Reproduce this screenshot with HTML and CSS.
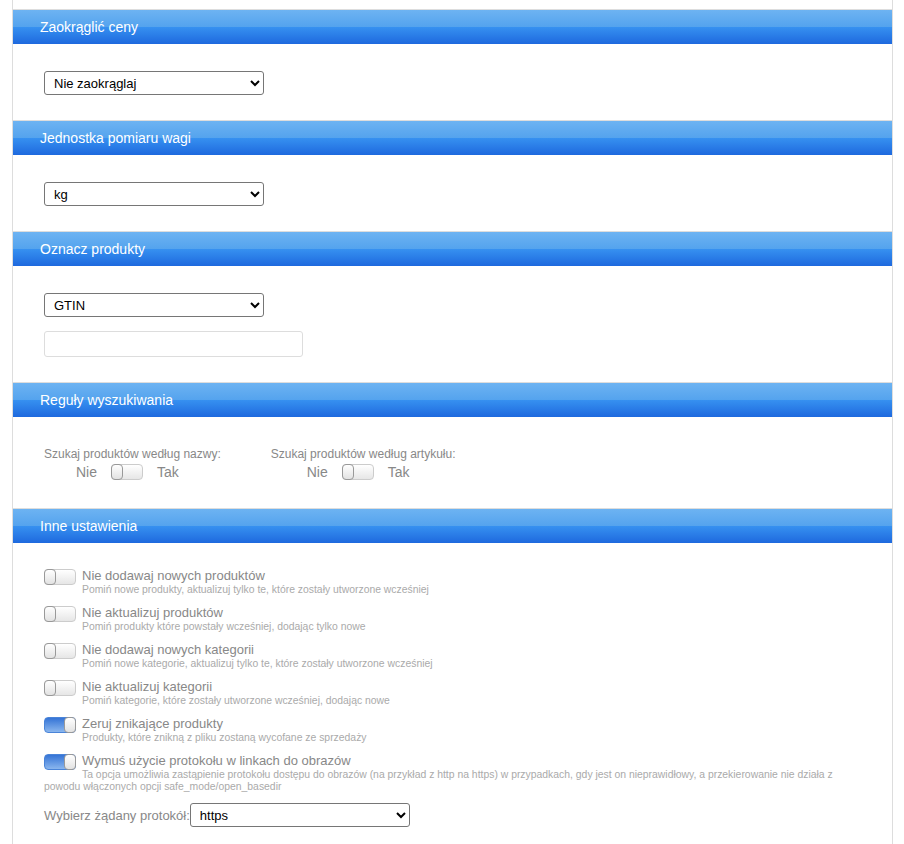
FILE: index.html
```html
<!DOCTYPE html>
<html>
<head>
<meta charset="utf-8">
<title>Ustawienia importu</title>
<link rel="stylesheet" href="styles.css">
</head>
<body>
<div class="settings">

  <div class="section">
    <div class="section-head">Zaokrąglić ceny</div>
    <div class="section-body">
      <select class="sel">
        <option>Nie zaokrąglaj</option>
        <option>Do 0.01</option>
        <option>Do 0.1</option>
        <option>Do 1</option>
      </select>
    </div>
  </div>

  <div class="section">
    <div class="section-head">Jednostka pomiaru wagi</div>
    <div class="section-body">
      <select class="sel">
        <option>kg</option>
        <option>g</option>
        <option>lb</option>
      </select>
    </div>
  </div>

  <div class="section">
    <div class="section-head">Oznacz produkty</div>
    <div class="section-body">
      <select class="sel">
        <option>GTIN</option>
        <option>EAN</option>
        <option>SKU</option>
      </select>
      <input type="text" class="txt">
    </div>
  </div>

  <div class="section">
    <div class="section-head">Reguły wyszukiwania</div>
    <div class="section-body search-rules">
      <div class="rule">
        <div class="rule-label">Szukaj produktów według nazwy:</div>
        <div class="rule-switch"><span>Nie</span><span class="switch"></span><span>Tak</span></div>
      </div>
      <div class="rule">
        <div class="rule-label">Szukaj produktów według artykułu:</div>
        <div class="rule-switch"><span>Nie</span><span class="switch"></span><span>Tak</span></div>
      </div>
    </div>
  </div>

  <div class="section">
    <div class="section-head">Inne ustawienia</div>
    <div class="section-body other">
      <div class="opt">
        <span class="switch"></span>
        <div class="opt-title">Nie dodawaj nowych produktów</div>
        <div class="opt-desc">Pomiń nowe produkty, aktualizuj tylko te, które zostały utworzone wcześniej</div>
      </div>
      <div class="opt">
        <span class="switch"></span>
        <div class="opt-title">Nie aktualizuj produktów</div>
        <div class="opt-desc">Pomiń produkty które powstały wcześniej, dodając tylko nowe</div>
      </div>
      <div class="opt">
        <span class="switch"></span>
        <div class="opt-title">Nie dodawaj nowych kategorii</div>
        <div class="opt-desc">Pomiń nowe kategorie, aktualizuj tylko te, które zostały utworzone wcześniej</div>
      </div>
      <div class="opt">
        <span class="switch"></span>
        <div class="opt-title">Nie aktualizuj kategorii</div>
        <div class="opt-desc">Pomiń kategorie, które zostały utworzone wcześniej, dodając nowe</div>
      </div>
      <div class="opt">
        <span class="switch on"></span>
        <div class="opt-title">Zeruj znikające produkty</div>
        <div class="opt-desc">Produkty, które znikną z pliku zostaną wycofane ze sprzedaży</div>
      </div>
      <div class="opt">
        <span class="switch on"></span>
        <div class="opt-title">Wymuś użycie protokołu w linkach do obrazów</div>
        <div class="opt-desc">Ta opcja umożliwia zastąpienie protokołu dostępu do obrazów (na przykład z http na https) w przypadkach, gdy jest on nieprawidłowy, a przekierowanie nie działa z powodu włączonych opcji safe_mode/open_basedir</div>
      </div>
      <div class="proto">
        <span>Wybierz żądany protokół:</span>
        <select class="sel">
          <option>https</option>
          <option>http</option>
        </select>
      </div>
    </div>
  </div>

</div>
</body>
</html>
```

FILE: styles.css
```css
body { margin: 0; background: #ffffff; font-family: "Liberation Sans", Arial, Helvetica, sans-serif; }

.settings { margin-left: 12px; width: 881px; min-height: 900px; padding-top: 9px; border-left: 1px solid #dddddd; border-right: 1px solid #dddddd; box-sizing: border-box; }

.section { border-top: 1px solid #dddddd; }
.section-head { height: 34px; line-height: 34px; padding-left: 27px; color: #ffffff; font-size: 14px; background: linear-gradient(to bottom, #6db3f2 0%, #54a3ee 50%, #3690f0 51%, #1e69de 100%); }
.section-body { padding: 27px 31px 25px 31px; }

.sel { display: block; width: 220px; height: 24px; font-family: "Liberation Sans", Arial, sans-serif; font-size: 13px; color: #000000; background: #ffffff; border: 1px solid #767676; border-radius: 3px; padding: 0 5px; box-sizing: border-box; }
.txt { display: block; margin-top: 14px; width: 259px; height: 26px; border: 1px solid #dddddd; border-radius: 3px; box-sizing: border-box; padding: 0 6px; }

.search-rules { display: flex; gap: 50px; padding-top: 30px; padding-bottom: 27px; }
.rule { text-align: center; }
.rule-label { font-size: 12px; color: #888888; line-height: 15px; }
.rule-switch { display: flex; justify-content: center; align-items: center; gap: 14px; margin-top: 1px; padding-right: 10px; font-size: 14px; color: #888888; line-height: 18px; }

.switch { position: relative; display: inline-block; width: 32px; height: 16px; border: 1px solid #cccccc; border-radius: 4px; background: linear-gradient(to bottom, #ffffff, #e6e6e6); box-sizing: border-box; }
.switch::before { content: ""; position: absolute; left: -1px; top: -1px; width: 12px; height: 16px; border: 1px solid #999999; border-radius: 4px; background: linear-gradient(to bottom, #ffffff, #e2e2e2); box-sizing: border-box; }
.switch.on { border-color: #4a84d8; background: linear-gradient(to bottom, #3574d6, #8ab6ee); }
.switch.on::before { left: auto; right: -1px; }

.other { padding-top: 25px; }
.opt { margin-bottom: 9px; }
.opt .switch { float: left; margin: 1px 6px 4px 0; }
.opt-title { font-size: 13px; line-height: 16px; color: #888888; }
.opt-desc { font-size: 10.4px; line-height: 12px; color: #aaaaaa; }

.proto { display: flex; align-items: center; gap: 0; margin-top: 10px; font-size: 13px; color: #888888; }
```
